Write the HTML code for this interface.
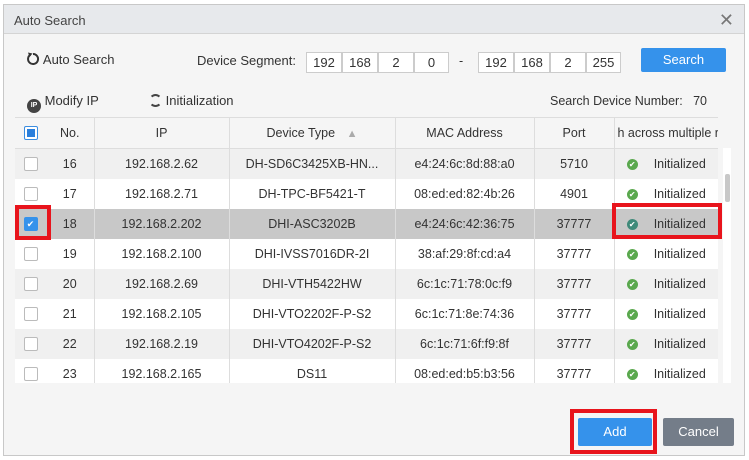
<!DOCTYPE html>
<html><head><style>
*{box-sizing:border-box;margin:0;padding:0}
body{width:749px;height:460px;background:#fff;font-family:"Liberation Sans",sans-serif;font-size:12.5px;color:#333;position:relative;overflow:hidden}
.dlg{position:absolute;left:3px;top:4px;width:742px;height:452px;border:1px solid #c8c8c8;background:#f5f5f5}
.title{height:29px;background:#e7e9ec;border-bottom:1px solid #d4d4d4;padding:8px 10px;color:#444;font-size:13px}
.x{position:absolute;right:10px;top:5px;font-size:18px;color:#777}
.abs{position:absolute}
.ipb{position:absolute;top:47px;height:21px;border:1px solid #ccc;background:#fff;text-align:center;line-height:19px;font-size:13px}
.btn{position:absolute;color:#fff;text-align:center;font-size:13px}
table{position:absolute;left:11px;top:112px;border-collapse:collapse;width:703px;table-layout:fixed;font-size:12.5px}
td,th{height:30px;text-align:center;border-right:1px solid #ddd;font-weight:normal;white-space:nowrap;overflow:hidden}
th{background:#f5f5f5;border-bottom:1px solid #ddd;border-top:1px solid #ddd;height:31px}
tr.g td{background:#f0f0f0}
tr.w td{background:#fff}
tr.s td{background:#c8c8c8}
.cb{display:inline-block;width:14px;height:14px;border:1px solid #bbb;background:#fff;border-radius:2px;vertical-align:middle}
.ok{display:inline-block;width:11px;height:11px;border-radius:50%;background:#5aa84e;color:#fff;font-size:8px;line-height:11px;vertical-align:middle;margin-right:16px}
.red{position:absolute;border:4px solid #e8141c}
</style></head><body>
<div class="dlg">
<div class="title">Auto Search</div><div class="x">✕</div>
<div class="abs" style="left:22px;top:47px;font-size:13px"><svg width="14" height="14" viewBox="0 0 14 14" style="vertical-align:-2px"><path d="M4.5 2.7A5 5 0 1 0 7 2" fill="none" stroke="#333" stroke-width="2"/><path d="M2 0.5L6.5 1.5L3.5 5Z" fill="#333"/></svg> Auto Search</div>
<div class="abs" style="left:193px;top:48px;font-size:13px">Device Segment:</div>
<div class="ipb" style="left:302px;width:36px">192</div><div class="ipb" style="left:338px;width:36px">168</div><div class="ipb" style="left:374px;width:36px">2</div><div class="ipb" style="left:410px;width:35px">0</div>
<div class="abs" style="left:455px;top:49px">-</div>
<div class="ipb" style="left:474px;width:36px">192</div><div class="ipb" style="left:510px;width:36px">168</div><div class="ipb" style="left:546px;width:36px">2</div><div class="ipb" style="left:582px;width:35px">255</div>
<div class="btn" style="left:637px;top:43px;width:85px;height:24px;background:#3592eb;line-height:24px;border-radius:2px">Search</div>
<div class="abs" style="left:23px;top:88px;font-size:13px"><span style="display:inline-block;width:14px;height:14px;border-radius:50%;background:#444;color:#fff;font-size:7px;line-height:14px;text-align:center;vertical-align:-2px;font-weight:bold">IP</span> Modify IP</div>
<div class="abs" style="left:145px;top:88px;font-size:13px"><span style="display:inline-block;width:13px;height:13px;border-radius:50%;border:2px solid #444;border-left-color:transparent;border-right-color:transparent;vertical-align:-2px"></span> Initialization</div>
<div class="abs" style="left:546px;top:89px;font-size:12.5px">Search Device Number:&nbsp;&nbsp; 70</div>
<div style="position:absolute;left:11px;top:112px;width:703px;height:266px;overflow:hidden">
<table style="left:0;top:0">
<colgroup><col style="width:31px"><col style="width:48px"><col style="width:135px"><col style="width:166px"><col style="width:139px"><col style="width:80px"><col style="width:104px"></colgroup>
<tr><th style="border-right:none"><span class="cb" style="border-color:#3b8de0;position:relative"><span style="position:absolute;left:2px;top:2px;width:8px;height:8px;background:#2a7fdc"></span></span></th><th>No.</th><th>IP</th><th>Device Type <span style="color:#aaa;font-size:11px;margin-left:8px">▲</span></th><th>MAC Address</th><th>Port</th><th style="text-align:left;padding-left:3px;border-right:none">h across multiple r</th></tr>
<tr class="g"><td style="border:none"><span class="cb"></span></td><td>16</td><td>192.168.2.62</td><td>DH-SD6C3425XB-HN...</td><td>e4:24:6c:8d:88:a0</td><td>5710</td><td style="border:none"><span class="ok">✔</span>Initialized</td></tr>
<tr class="w"><td style="border:none"><span class="cb"></span></td><td>17</td><td>192.168.2.71</td><td>DH-TPC-BF5421-T</td><td>08:ed:ed:82:4b:26</td><td>4901</td><td style="border:none"><span class="ok">✔</span>Initialized</td></tr>
<tr class="s"><td style="border:none"><span class="cb" style="background:#3592eb;border-color:#3592eb;color:#fff;font-size:9px;line-height:12px">✔</span></td><td>18</td><td>192.168.2.202</td><td>DHI-ASC3202B</td><td>e4:24:6c:42:36:75</td><td>37777</td><td style="border:none"><span class="ok" style="background:#3f8a7a">✔</span>Initialized</td></tr>
<tr class="w"><td style="border:none"><span class="cb"></span></td><td>19</td><td>192.168.2.100</td><td>DHI-IVSS7016DR-2I</td><td>38:af:29:8f:cd:a4</td><td>37777</td><td style="border:none"><span class="ok">✔</span>Initialized</td></tr>
<tr class="g"><td style="border:none"><span class="cb"></span></td><td>20</td><td>192.168.2.69</td><td>DHI-VTH5422HW</td><td>6c:1c:71:78:0c:f9</td><td>37777</td><td style="border:none"><span class="ok">✔</span>Initialized</td></tr>
<tr class="w"><td style="border:none"><span class="cb"></span></td><td>21</td><td>192.168.2.105</td><td>DHI-VTO2202F-P-S2</td><td>6c:1c:71:8e:74:36</td><td>37777</td><td style="border:none"><span class="ok">✔</span>Initialized</td></tr>
<tr class="g"><td style="border:none"><span class="cb"></span></td><td>22</td><td>192.168.2.19</td><td>DHI-VTO4202F-P-S2</td><td>6c:1c:71:6f:f9:8f</td><td>37777</td><td style="border:none"><span class="ok">✔</span>Initialized</td></tr>
<tr class="w"><td style="border:none"><span class="cb"></span></td><td>23</td><td>192.168.2.165</td><td>DS11</td><td>08:ed:ed:b5:b3:56</td><td>37777</td><td style="border:none"><span class="ok">✔</span>Initialized</td></tr>
</table></div>
<div class="abs" style="left:719px;top:143px;width:8px;height:235px;background:#fff"></div>
<div class="abs" style="left:721px;top:169px;width:5px;height:28px;background:#c8c8c8;border-radius:2px"></div>
<div class="btn" style="left:574px;top:413px;width:74px;height:28px;background:#3592eb;line-height:28px;border-radius:2px">Add</div>
<div class="btn" style="left:659px;top:413px;width:71px;height:28px;background:#747d89;line-height:28px;border-radius:2px">Cancel</div>
</div>
<div class="red" style="left:15px;top:205px;width:36px;height:35px"></div>
<div class="red" style="left:612px;top:203px;width:110px;height:36px"></div>
<div class="red" style="left:570px;top:409px;width:87px;height:45px"></div>
</body></html>
